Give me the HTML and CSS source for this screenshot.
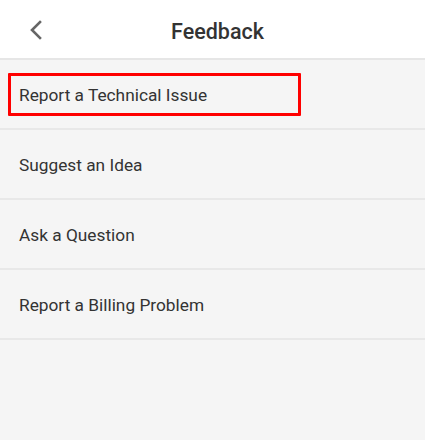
FILE: index.html
```html
<!DOCTYPE html>
<html>
<head>
<meta charset="utf-8">
<link rel="stylesheet" href="styles.css">
</head>
<body>
<div class="app">
  <header class="topbar">
    <button class="back" aria-label="Back">
      <svg width="14" height="20" viewBox="0 0 14 20"><polyline points="11,2 3,10 11,18" fill="none" stroke="#666" stroke-width="2.6" stroke-linecap="square" stroke-linejoin="miter"/></svg>
    </button>
    <h1 class="title">Feedback</h1>
  </header>
  <ul class="list">
    <li class="item highlighted"><span class="label">Report a Technical Issue</span><span class="mark"></span></li>
    <li class="item"><span class="label">Suggest an Idea</span></li>
    <li class="item"><span class="label">Ask a Question</span></li>
    <li class="item"><span class="label">Report a Billing Problem</span></li>
  </ul>
</div>
</body>
</html>
```

FILE: styles.css
```css
html, body {
  margin: 0;
  padding: 0;
  height: 100%;
}
body {
  background: #f5f5f5;
  font-family: Roboto, "Liberation Sans", sans-serif;
  color: #333;
}
.app {
  min-height: 100%;
  background: #f5f5f5;
}
.topbar {
  height: 58px;
  background: #fff;
  border-bottom: 2px solid #e6e6e6;
  display: flex;
  align-items: center;
  justify-content: center;
  position: relative;
}
.back {
  position: absolute;
  left: 29px;
  top: 20px;
  width: 14px;
  height: 20px;
  padding: 0;
  border: 0;
  background: none;
  display: flex;
}
.title {
  margin: 0;
  font-size: 21.5px;
  font-weight: 500;
  color: #333;
  margin-left: 10px;
  margin-top: 4px;
}
.list {
  list-style: none;
  margin: 0;
  padding: 0;
}
.item {
  height: 68px;
  box-sizing: border-box;
  height: 70px;
  padding-top: 2px;
  border-bottom: 2px solid #e8e8e8;
  display: flex;
  align-items: center;
  padding-left: 19px;
  font-size: 17.3px;
  color: #333;
  position: relative;
}
.mark {
  position: absolute;
  left: 8px;
  top: 13px;
  width: 293px;
  height: 43px;
  box-sizing: border-box;
  border: 3px solid #f00;
  border-radius: 1px;
}
```
